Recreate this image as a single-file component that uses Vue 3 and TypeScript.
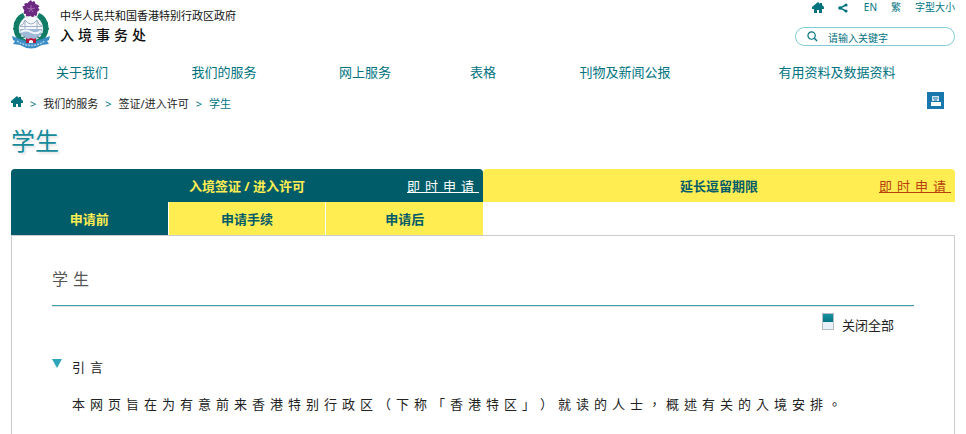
<script setup lang="ts">
import { ref } from 'vue'

interface NavItem {
  label: string
  href: string
}

const navItems: NavItem[] = [
  { label: '关于我们', href: '#about' },
  { label: '我们的服务', href: '#services' },
  { label: '网上服务', href: '#online' },
  { label: '表格', href: '#forms' },
  { label: '刊物及新闻公报', href: '#press' },
  { label: '有用资料及数据资料', href: '#facts' },
]

const steps: string[] = ['申请前', '申请手续', '申请后']
const activeStep = ref(0)
const expanded = ref(true)
const keyword = ref('')
const petals: number[] = [0, 72, 144, 216, 288]
</script>

<template>
  <div class="page" lang="zh-Hans">
    <header class="header">
      <a class="brand" href="#home">
        <svg class="emblem" viewBox="0 0 40 50" aria-hidden="true">
          <circle cx="20" cy="28" r="12" fill="#f4f8fc" />
          <path d="M9 29h22a11 11 0 0 1-22 0z" fill="#9fb9d8" />
          <path d="M9 26.500h22M14 20v9M26 20v9M9 26q4-1 5-6 6 8 12 0 1 5 5 6" fill="none" stroke="#a3b1c6" stroke-width="1" />
          <path d="M10 32q5-3 10 0t10-1" fill="none" stroke="#f4f8fc" stroke-width="2" />
          <circle cx="20" cy="28" r="12" fill="none" stroke="#d8dfe8" stroke-width="1" />
          <path d="M12 13C1 17-1 34 9 41l6 2 1-3C5 36 6 23 14 17z" fill="#12806a" />
          <path d="M28 13c11 4 13 21 3 28l-6 2-1-3c11-4 10-17 2-23z" fill="#12806a" />
          <path d="M10 15l2 4-6-1 3 4-6 1 4 3-5 3 5 1-3 4 6 0-1 4 5-1M30 15l-2 4 6-1-3 4 6 1-4 3 5 3-5 1 3 4-6 0 1 4-5-1" fill="none" stroke="#117560" stroke-width="1" />
          <path d="M1 36l8 3q11 5 22 0l8-3-1 4-2 1 2 3-7 1q-11 7-22 0l-7-1 2-3-2-1z" fill="#3c8cc5" />
          <path d="M6 41q14 9 28 0" fill="none" stroke="#a4cfea" stroke-width="1.500" stroke-dasharray="2 1" />
          <path d="M15 38l2 1 3-1 3 1 2-1v5H15z" fill="#b5143c" />
          <path d="M18 43v-2q2-2 4 0v2z" fill="#fff" />
          <g fill="#6b2a80">
            <path
              v-for="angle in petals"
              :key="angle"
              d="M20 9C15 6 15 3 20 0l1 2 2-1C26 4 24 7 20 9z"
              :transform="`rotate(${angle} 20 9)`"
            />
          </g>
          <path d="M20 9V5M20 9l4-1M20 9l2 3M20 9l-2 3M20 9l-4-1" stroke="#a56bb2" stroke-width="1" />
        </svg>
        <span class="brand-text">
          <span class="brand-gov">中华人民共和国香港特别行政区政府</span>
          <span class="brand-dept">入境事务处</span>
        </span>
      </a>

      <div class="tools">
        <div class="tool-row">
          <a class="tool-icon" href="#home" aria-label="主页">
            <svg class="home" viewBox="0 0 12 11"><path d="M6 0L0 5v2h2v4h3V8h2v3h3V7h2V5L10 3V1H8v1z" /></svg>
          </a>
          <button class="tool-icon" type="button" aria-label="分享">
            <svg class="share" viewBox="0 0 10 10">
              <path d="M8 2L2 5l6 3" fill="none" stroke="#00737f" stroke-width="1.400" />
              <circle cx="8" cy="2" r="1.600" /><circle cx="2" cy="5" r="1.800" /><circle cx="8" cy="8" r="1.600" />
            </svg>
          </button>
          <a class="tool-en" href="#en">EN</a>
          <a class="tool-tc" href="#tc">繁</a>
          <a href="#size">字型大小</a>
        </div>
        <form class="search" role="search" @submit.prevent>
          <button class="search-button" type="submit" aria-label="搜寻">
            <svg viewBox="0 0 12 12">
              <circle cx="5" cy="5" r="4" fill="none" stroke="#00737f" stroke-width="1.300" />
              <path d="M8 8l3 3" stroke="#00737f" stroke-width="1.500" />
            </svg>
          </button>
          <input v-model="keyword" class="search-input" type="text" aria-label="请输入关键字" placeholder="请输入关键字" />
        </form>
      </div>
    </header>

    <nav class="nav">
      <a v-for="item in navItems" :key="item.href" :href="item.href">{{ item.label }}</a>
    </nav>

    <div class="crumb-bar">
      <nav class="crumbs">
        <a class="crumb-home" href="#home" aria-label="主页">
          <svg class="home" viewBox="0 0 12 11"><path d="M6 0L0 5v2h2v4h3V8h2v3h3V7h2V5L10 3V1H8v1z" /></svg>
        </a>
        <span class="sep">&gt;</span>
        <a href="#services">我们的服务</a>
        <span class="sep">&gt;</span>
        <a href="#visas">签证/进入许可</a>
        <span class="sep">&gt;</span>
        <span class="current">学生</span>
      </nav>
      <button class="print" type="button" aria-label="打印">
        <svg viewBox="0 0 17 17">
          <path d="M5 4h7v5H5z" fill="#cfe4f0" />
          <path d="M6 6h5M7 8h3" stroke="#1878ae" stroke-width="1" />
          <path d="M4 10h10v4H4z" fill="#fff" />
        </svg>
      </button>
    </div>

    <h1 class="title">学生</h1>

    <div class="tabs">
      <section class="tab-group">
        <div class="tab tab-active">
          <a class="tab-name" href="#entry">入境签证 / 进入许可</a>
          <a class="apply" href="#apply-entry">即时申请</a>
        </div>
        <div class="steps">
          <button
            v-for="(step, index) in steps"
            :key="step"
            type="button"
            class="step"
            :class="{ 'step-active': index === activeStep }"
            @click="activeStep = index"
          >{{ step }}</button>
        </div>
      </section>
      <section class="tab-group">
        <div class="tab">
          <a class="tab-name" href="#extension">延长逗留期限</a>
          <a class="apply" href="#apply-extension">即时申请</a>
        </div>
      </section>
    </div>

    <main class="panel">
      <h2 class="panel-title">学生</h2>
      <div class="toggle-row">
        <button class="toggle-all" type="button" @click="expanded = !expanded">
          <span class="toggle-icon"></span>
          <span>关闭全部</span>
        </button>
      </div>
      <section class="topic">
        <button class="topic-head" type="button" :aria-expanded="expanded" @click="expanded = !expanded">
          <svg class="arrow" viewBox="0 0 10 9"><path d="M0 0h10L5 9z" /></svg>
          <span>引言</span>
        </button>
        <p v-show="expanded" class="topic-text" lang="zh-Hant">本网页旨在为有意前来香港特别行政区（下称「香港特区」）就读的人士，概述有关的入境安排。</p>
      </section>
    </main>
  </div>
</template>

<style>
body {
  margin: 0;
  background: #fff;
}
</style>

<style scoped>
.page {
  padding: 0 11px;
  font-family: "Noto Sans", "Noto Sans CJK SC", sans-serif;
  font-size: 13px;
  line-height: 20px;
  color: #222;
}

a {
  color: inherit;
  text-decoration: none;
}

button {
  padding: 0;
  border: 0;
  background: none;
  font: inherit;
  color: inherit;
  cursor: pointer;
}

svg {
  display: block;
}

.header {
  display: flex;
  justify-content: space-between;
  height: 54px;
}

.brand {
  display: flex;
  gap: 9px;
  color: #111;
}

.emblem {
  width: 40px;
  height: 50px;
}

.brand-text {
  display: flex;
  flex-direction: column;
  padding-top: 7px;
}

.brand-gov {
  font-size: 11px;
  line-height: 18px;
}

.brand-dept {
  font-size: 14px;
  font-weight: 500;
  letter-spacing: 4px;
}

.tools {
  display: flex;
  flex-direction: column;
  align-items: flex-end;
  gap: 12px;
}

.tool-row {
  display: flex;
  align-items: center;
  gap: 14px;
  height: 15px;
  font-size: 10px;
  line-height: 15px;
  color: #00737f;
}

.home {
  width: 12px;
  height: 11px;
  fill: #00737f;
}

.share {
  width: 10px;
  height: 10px;
  fill: #00737f;
}

.tool-en {
  padding-left: 2px;
}

.search {
  box-sizing: border-box;
  display: flex;
  align-items: center;
  gap: 10px;
  width: 160px;
  height: 19px;
  padding: 0 11px;
  border: 1px solid #7fcdd6;
  border-radius: 10px;
}

.search-button {
  width: 11px;
  height: 11px;
  flex: none;
}

.search-input {
  flex: 1;
  min-width: 0;
  height: 17px;
  padding: 2px 0 0;
  box-sizing: border-box;
  border: 0;
  outline: 0;
  background: none;
  font: inherit;
  font-size: 10px;
  line-height: 15px;
  color: #00737f;
}

.search-input::placeholder {
  color: #00737f;
  opacity: 1;
}

.nav {
  display: grid;
  grid-template-columns: 142fr 142fr 140fr 96fr 188fr 236fr;
  line-height: 36px;
  text-align: center;
  color: #00737f;
}

.crumb-bar {
  display: flex;
  justify-content: space-between;
  align-items: flex-start;
  height: 26px;
  padding: 2px 11px 0 0;
}

.crumbs {
  display: flex;
  gap: 7px;
  font-size: 11px;
  line-height: 24px;
}

.crumb-home {
  padding-top: 4px;
}

.sep,
.current {
  color: #00737f;
}

.print {
  width: 17px;
  height: 17px;
  background: #1878ae;
}

.title {
  margin: 0 0 6px;
  font-size: 24px;
  font-weight: 400;
  line-height: 45px;
  color: #158a9b;
  text-shadow: 2px 2px 2px #e4e4e4;
}

.tabs {
  display: grid;
  grid-template-columns: 1fr 1fr;
}

.tab {
  display: grid;
  grid-template-columns: 1fr auto 1fr;
  align-items: center;
  height: 33px;
  border-radius: 4px 4px 0 0;
  background: #ffed51;
  color: #005c69;
}

.tab-active {
  background: #005c69;
  color: #ffed51;
}

.tab-name {
  grid-column: 2;
  font-weight: 700;
}

.apply {
  justify-self: end;
  margin-right: 4px;
  letter-spacing: 5px;
  color: #b8400e;
  text-decoration: underline;
}

.tab-active .apply {
  color: #fff;
}

.steps {
  display: grid;
  grid-template-columns: repeat(3, 1fr);
  gap: 1px;
}

.step {
  height: 33px;
  background: #ffed51;
  font-weight: 700;
  color: #005c69;
}

.step-active {
  background: #005c69;
  color: #ffed51;
}

.panel {
  padding: 26px 40px 20px;
  border: 1px solid #ccc;
  border-bottom: 0;
}

.panel-title {
  margin: 0;
  padding-bottom: 8px;
  border-bottom: 1px solid #3ba0ae;
  box-shadow: 0 1px 0 #e4e4e4;
  font-size: 16px;
  font-weight: 400;
  line-height: 35px;
  letter-spacing: 5px;
  color: #555;
}

.toggle-row {
  display: flex;
  justify-content: flex-end;
  padding: 7px 20px 0 0;
}

.toggle-all {
  display: flex;
  gap: 8px;
  line-height: 24px;
}

.toggle-icon {
  box-sizing: border-box;
  width: 12px;
  height: 17px;
  border: 1px solid #b5bcc2;
  background: linear-gradient(#1594a3 0, #087482 8px, #e8f0f8 8px);
}

.topic {
  padding-top: 20px;
}

.topic-head {
  display: flex;
  gap: 10px;
  letter-spacing: 5px;
}

.arrow {
  width: 10px;
  height: 9px;
  margin-top: 2px;
  fill: #2ea6b8;
}

.topic-text {
  margin: 17px 0 0;
  padding-left: 20px;
  font-family: "Noto Sans CJK TC", sans-serif;
  letter-spacing: 5px;
  text-spacing-trim: space-all;
}
</style>
